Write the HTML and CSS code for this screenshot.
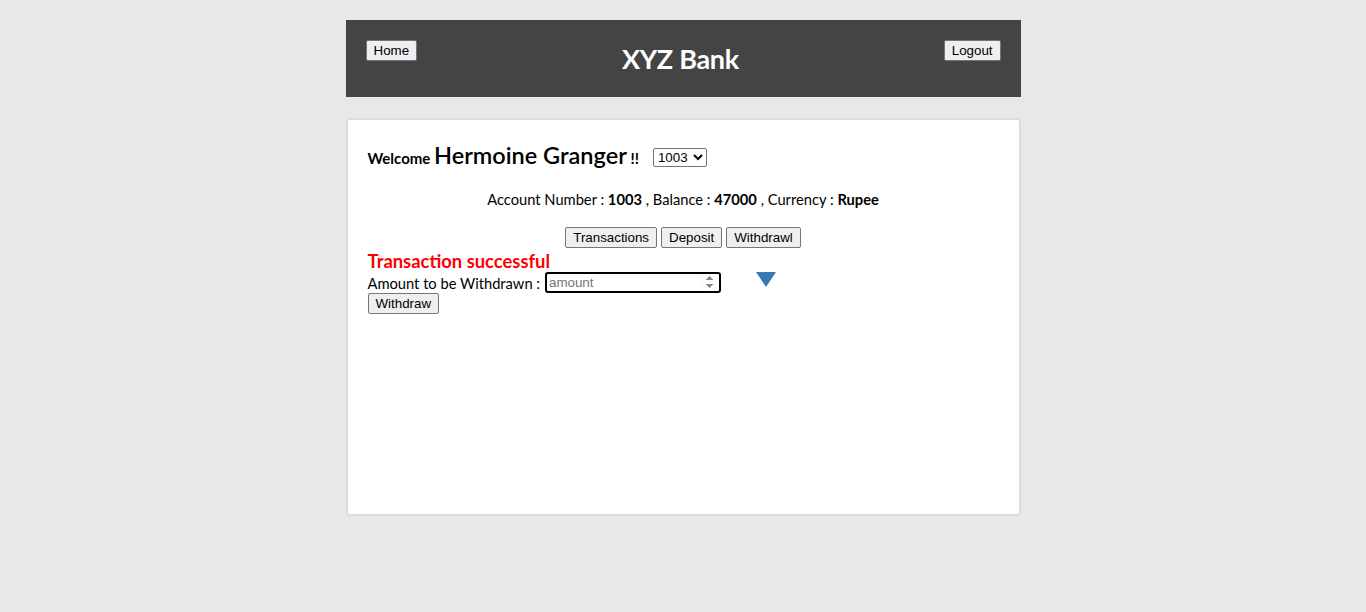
FILE: index.html
```html
<!DOCTYPE html>
<html>
<head>
<meta charset="utf-8">
<title>XYZ Bank</title>
<link rel="stylesheet" href="styles.css">
</head>
<body>
<div class="page">
  <header class="topbar">
    <button class="btn">Home</button>
    <strong class="brand">XYZ Bank</strong>
    <button class="btn">Logout</button>
  </header>
  <main class="card">
    <div class="welcome">
      <strong class="hello">Welcome <span class="name">Hermoine Granger</span> !!</strong>
      <select class="acct"><option>1003</option></select>
    </div>
    <div class="info">Account Number : <strong>1003</strong> , Balance : <strong>47000</strong> , Currency : <strong>Rupee</strong></div>
    <div class="tabs">
      <button class="btn">Transactions</button>
      <button class="btn">Deposit</button>
      <button class="btn">Withdrawl</button>
    </div>
    <div class="msg">Transaction successful</div>
    <form class="form">
      <div class="row">
        <label class="lbl">Amount to be Withdrawn :</label>
        <input class="amount" type="number" placeholder="amount" autofocus>
        <span class="tri"></span>
      </div>
      <button class="btn" type="button">Withdraw</button>
    </form>
  </main>
</div>
</body>
</html>
```

FILE: styles.css
```css
html, body { margin: 0; padding: 0; }
body {
  background: #e8e8e8;
  font-family: "Lato", "Open Sans", sans-serif;
  color: #000;
}
.page {
  width: 675px;
  margin: 0 auto;
  padding-top: 20px;
}
.topbar {
  background: #444444;
  height: 77px;
  box-sizing: border-box;
  padding: 20px 20px 0 20px;
  display: flex;
  justify-content: space-between;
  align-items: flex-start;
}
.brand {
  color: #fff;
  font-size: 27px;
  font-weight: 700;
  margin-top: 2px;
  letter-spacing: -0.3px;
}
.btn {
  font-family: "Liberation Sans", Arial, sans-serif;
  font-size: 13.33px;
  padding: 1px 7px;
  height: 21px;
  background: #efefef;
  border: 1px solid #767676;
  border-radius: 2px;
  color: #000;
}
.card {
  margin-top: 21px;
  background: #fff;
  border: 2px solid #dcdcdc;
  border-radius: 4px;
  height: 398px;
  box-sizing: border-box;
  padding: 23px 20px 20px 20px;
}
.welcome {
  display: flex;
  align-items: center;
  height: 24px;
}
.hello { font-size: 15px; font-weight: 700; }
.name { font-size: 23.5px; font-weight: 600; }
.acct {
  margin-left: 14px;
  margin-top: 4px;
  font-family: "Liberation Sans", Arial, sans-serif;
  font-size: 13.33px;
  width: 54px;
  height: 19px;
  padding: 0;
  border: 1px solid #767676;
  border-radius: 2px;
  background: #fff;
}
.info {
  text-align: center;
  font-size: 14.7px;
  margin-top: 23px;
}
.tabs {
  margin-top: 19px;
  display: flex;
  justify-content: center;
  gap: 4px;
}
.msg {
  color: #ff0000;
  font-weight: 700;
  font-size: 18.4px;
  line-height: 22px;
  margin-top: 2px;
}
.form { display: flex; flex-direction: column; align-items: flex-start; }
.row { display: flex; align-items: center; font-size: 14.7px; }
.lbl { margin-right: 5px; }
.amount {
  width: 176px;
  height: 21px;
  box-sizing: border-box;
  border: 2px solid #000;
  border-radius: 3px;
  padding: 0 2px;
  font-family: "Liberation Sans", Arial, sans-serif;
  font-size: 13.33px;
  outline: none;
}
.amount::placeholder { color: #757575; }
.tri {
  margin-left: 35px;
  width: 0; height: 0;
  border-left: 10px solid transparent;
  border-right: 10px solid transparent;
  border-top: 15px solid #337ab7;
  margin-top: -6px;
}
```
